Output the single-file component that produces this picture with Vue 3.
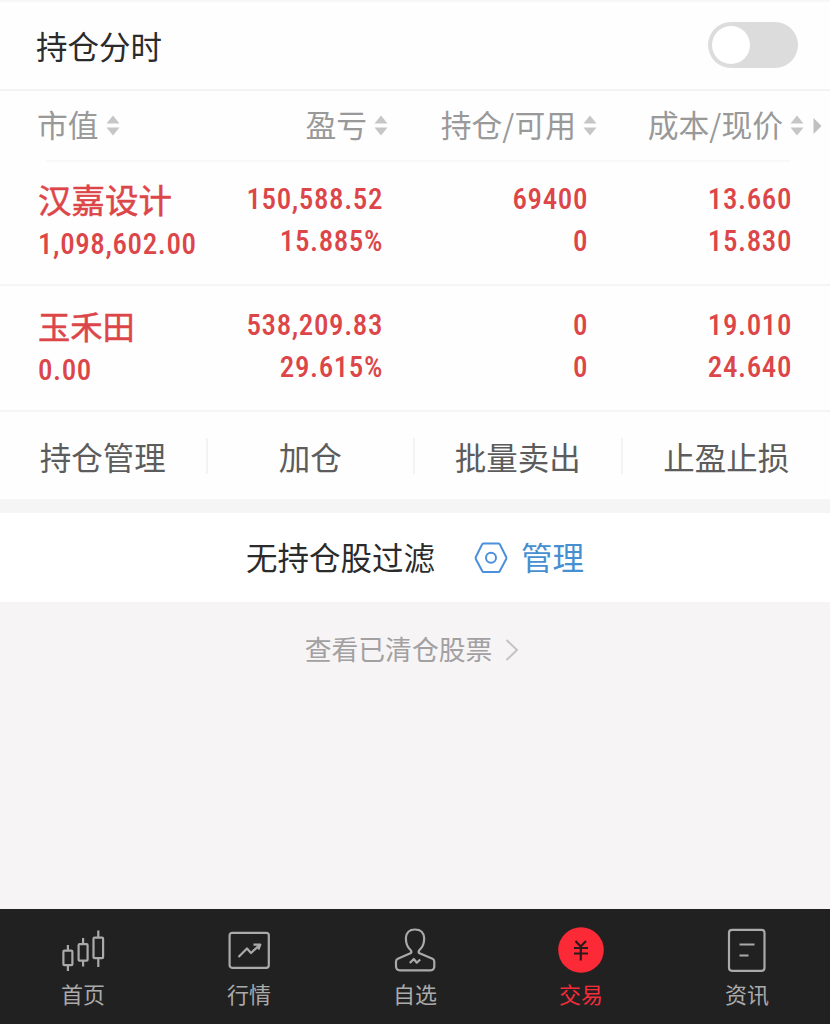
<template>
  <div class="page">
    <div class="switch-row">
      <span>持仓分时</span>
      <button class="switch" :class="{ on: showChart }" @click="showChart = !showChart">
        <i class="knob"></i>
      </button>
    </div>

    <div class="table-head">
      <div v-for="col in columns" :key="col" class="head-cell">
        <span>{{ col }}</span>
        <svg class="sort" width="14" height="22" viewBox="0 0 14 22">
          <path d="M7 0.5L13.5 8.5H0.5ZM0.5 12.5H13.5L7 20.5Z" fill="#c6c6c6" />
        </svg>
      </div>
      <svg class="more" width="9" height="18" viewBox="0 0 9 18">
        <path d="M0.5 1L8.5 9L0.5 17Z" fill="#c0c0c0" />
      </svg>
    </div>
    <div class="head-line"></div>

    <div v-for="item in holdings" :key="item.name" class="holding">
      <div class="cell first">
        <span class="name" :class="{ short: item.name.length < 4 }">{{ item.name }}</span>
        <span>{{ item.value }}</span>
      </div>
      <div class="cell">
        <span>{{ item.profit }}</span>
        <span>{{ item.rate }}</span>
      </div>
      <div class="cell">
        <span>{{ item.amount }}</span>
        <span>{{ item.usable }}</span>
      </div>
      <div class="cell">
        <span>{{ item.cost }}</span>
        <span>{{ item.price }}</span>
      </div>
    </div>

    <div class="actions">
      <div v-for="action in actions" :key="action" class="action">{{ action }}</div>
    </div>

    <div class="filter">
      <span>无持仓股过滤</span>
      <a class="manage">
        <svg width="34" height="32" viewBox="0 0 34 32" fill="none" stroke="#4a90dc" stroke-width="2">
          <path d="M9.5 1.5H24.5Q25.3 1.5 25.8 2.3L32.2 15Q32.6 16 32.2 17L25.8 29Q25.3 30 24.5 30H9.5Q8.7 30 8.2 29L1.8 17Q1.4 16 1.8 15L8.2 2.3Q8.7 1.5 9.5 1.5Z" />
          <circle cx="17" cy="15.8" r="5" />
        </svg>
        <span>管理</span>
      </a>
    </div>

    <div class="cleared">
      <span>查看已清仓股票</span>
      <svg width="14" height="24" viewBox="0 0 14 24" fill="none" stroke="#c4c4c4" stroke-width="2">
        <path d="M1.5 2L12 12L1.5 22" />
      </svg>
    </div>

    <nav class="tabbar">
      <div
        v-for="tab in tabs"
        :key="tab.key"
        class="tab"
        :class="{ active: tab.key === current }"
        @click="current = tab.key"
      >
        <svg width="48" height="48" viewBox="0 0 48 48" fill="none" stroke="#aaa" stroke-width="2.2" stroke-linejoin="round">
          <g v-if="tab.key === 'home'">
            <rect x="4.4" y="24.7" width="9" height="14.5" rx="1" />
            <rect x="19.6" y="18.2" width="9" height="16.5" rx="1" />
            <rect x="34.5" y="11.7" width="9.6" height="20.5" rx="1" />
            <path d="M8.9 19V24.5M8.9 39.5V45M24.1 12V18M24.1 35V40.5M39.3 4.5V11.5M39.3 32.5V41" />
          </g>
          <g v-else-if="tab.key === 'market'">
            <rect x="4.6" y="6.8" width="39.2" height="35" rx="2.5" />
            <path d="M13.5 31L22 22.5L26 27L34 19.5" />
            <path d="M28.5 18.6H35.3L33.3 23.5" />
          </g>
          <g v-else-if="tab.key === 'self'">
            <path d="M20 27L6.8 32.7Q5 33.5 5 35.5V40Q5 44.3 9 44.3H39.5Q43.3 44.3 43.3 40.3V35.5Q43.3 33.5 41.5 32.7L28 27Q27 26 28.5 24Q33.2 20 33.2 12Q32.5 3.5 24 3.5Q15.5 3.5 14.9 12Q14.9 20 19.5 24Q21 26 20 27Z" />
            <path d="M18.8 37L22.8 33L25.8 36.7L29.2 33.5" />
          </g>
          <g v-else-if="tab.key === 'trade'">
            <circle cx="24" cy="24" r="22.8" fill="#fc2a36" stroke="none" />
            <path d="M18.5 15L23.7 20.5L29 15M17 22H31M17 27.5H31M23.8 20.5V34.5" stroke="#2b1a1c" />
          </g>
          <g v-else>
            <rect x="6" y="3.8" width="35.5" height="41" rx="3" />
            <path d="M16.5 18.5H31.5M16.5 29.5H25.5" />
          </g>
        </svg>
        <span>{{ tab.label }}</span>
      </div>
    </nav>
  </div>
</template>

<script setup>
import { ref } from 'vue'

const showChart = ref(false)
const current = ref('trade')

const columns = ['市值', '盈亏', '持仓/可用', '成本/现价']

const holdings = [
  {
    name: '汉嘉设计',
    value: '1,098,602.00',
    profit: '150,588.52',
    rate: '15.885%',
    amount: '69400',
    usable: '0',
    cost: '13.660',
    price: '15.830'
  },
  {
    name: '玉禾田',
    value: '0.00',
    profit: '538,209.83',
    rate: '29.615%',
    amount: '0',
    usable: '0',
    cost: '19.010',
    price: '24.640'
  }
]

const actions = ['持仓管理', '加仓', '批量卖出', '止盈止损']

const tabs = [
  { key: 'home', label: '首页' },
  { key: 'market', label: '行情' },
  { key: 'self', label: '自选' },
  { key: 'trade', label: '交易' },
  { key: 'news', label: '资讯' }
]
</script>

<style>
body {
  background: #f6f4f5;
}
</style>

<style scoped>
.page {
  display: flex;
  flex-direction: column;
  height: 1024px;
  overflow: hidden;
  box-sizing: border-box;
  border-top: 2px solid #f8f6f7;
  font-family: 'Noto Sans CJK SC', sans-serif;
  background: #f6f4f5;
}

.switch-row {
  display: flex;
  align-items: center;
  justify-content: space-between;
  height: 87px;
  padding: 0 32px 0 36px;
  box-sizing: border-box;
  background: #fefefe;
  font-size: 31.5px;
  color: #2b2b2b;
}

.switch-row span {
  padding-bottom: 2px;
}

.switch {
  width: 90px;
  height: 46px;
  margin-bottom: 2px;
  padding: 4px;
  border: none;
  border-radius: 23px;
  background: #dcdcdc;
}

.knob {
  display: block;
  width: 38px;
  height: 38px;
  border-radius: 50%;
  background: #fff;
}

.switch.on {
  background: #fc2a36;
}

.switch.on .knob {
  margin-left: auto;
}

.table-head {
  display: grid;
  grid-template-columns: 167px 184px 209px 207px 9px;
  align-items: center;
  height: 69px;
  padding-left: 37px;
  border-top: 2px solid #f3f3f3;
  background: #fefefe;
  font-size: 30.8px;
  color: #999;
}

.head-cell {
  display: flex;
  align-items: center;
  justify-content: flex-end;
  gap: 7px;
  white-space: nowrap;
}

.head-cell span {
  padding-bottom: 4px;
}

.head-cell:first-child {
  justify-content: flex-start;
}

.more {
  margin-left: 9px;
}

.head-line {
  height: 2px;
  margin-bottom: -2px;
  border-left: 46px solid #fefefe;
  border-right: 40px solid #fefefe;
  background: #f8f8f8;
  z-index: 1;
}

.holding {
  display: grid;
  grid-template-columns: 165px 180px 205px 204px;
  height: 124px;
  padding-left: 38px;
  border-bottom: 2px solid #f5f5f5;
  background: #fefefe;
  font-family: Roboto, 'Noto Sans CJK SC', sans-serif;
  font-size: 29px;
  font-weight: 500;
  font-stretch: 87%;
  letter-spacing: 0.6px;
  line-height: 42px;
  color: #dc4649;
}

.cell {
  display: flex;
  flex-direction: column;
  align-items: flex-end;
  padding-top: 18px;
}

.first {
  align-items: flex-start;
}

.name {
  padding-top: 3px;
  font-size: 33.5px;
  font-weight: 400;
  letter-spacing: 0;
  white-space: nowrap;
  -webkit-text-stroke: 0.5px #dc4649;
}

.name.short {
  font-size: 32.3px;
}

.actions {
  display: grid;
  grid-template-columns: repeat(4, 1fr);
  align-items: center;
  height: 87px;
  border-bottom: 14px solid #f5f5f5;
  background: #fefefe;
}

.action {
  height: 36px;
  border-right: 2px solid #f3f3f3;
  font-size: 31.5px;
  line-height: 36px;
  text-align: center;
  color: #5c5c5c;
}

.action:last-child {
  border-right: none;
}

.filter {
  display: flex;
  align-items: center;
  justify-content: center;
  gap: 39px;
  height: 89px;
  background: #fff;
  font-size: 31.5px;
  color: #2b2b2b;
}

.filter span {
  padding-bottom: 3px;
}

.manage {
  display: flex;
  align-items: center;
  gap: 13px;
  color: #468fd0;
}

.cleared {
  display: flex;
  align-items: center;
  justify-content: center;
  gap: 13px;
  height: 96px;
  padding-right: 6px;
  font-size: 26.8px;
  color: #a2a0a1;
}

.cleared span {
  padding-bottom: 3px;
}

.tabbar {
  display: grid;
  grid-template-columns: repeat(5, 1fr);
  height: 115px;
  margin-top: auto;
  background: #222122;
}

.tab {
  display: flex;
  flex-direction: column;
  align-items: center;
  padding-top: 17px;
  font-size: 22px;
  line-height: 32px;
  color: #aaa;
}

.tab span {
  margin-top: 3px;
}

.tab.active {
  color: #f62c3a;
}
</style>
